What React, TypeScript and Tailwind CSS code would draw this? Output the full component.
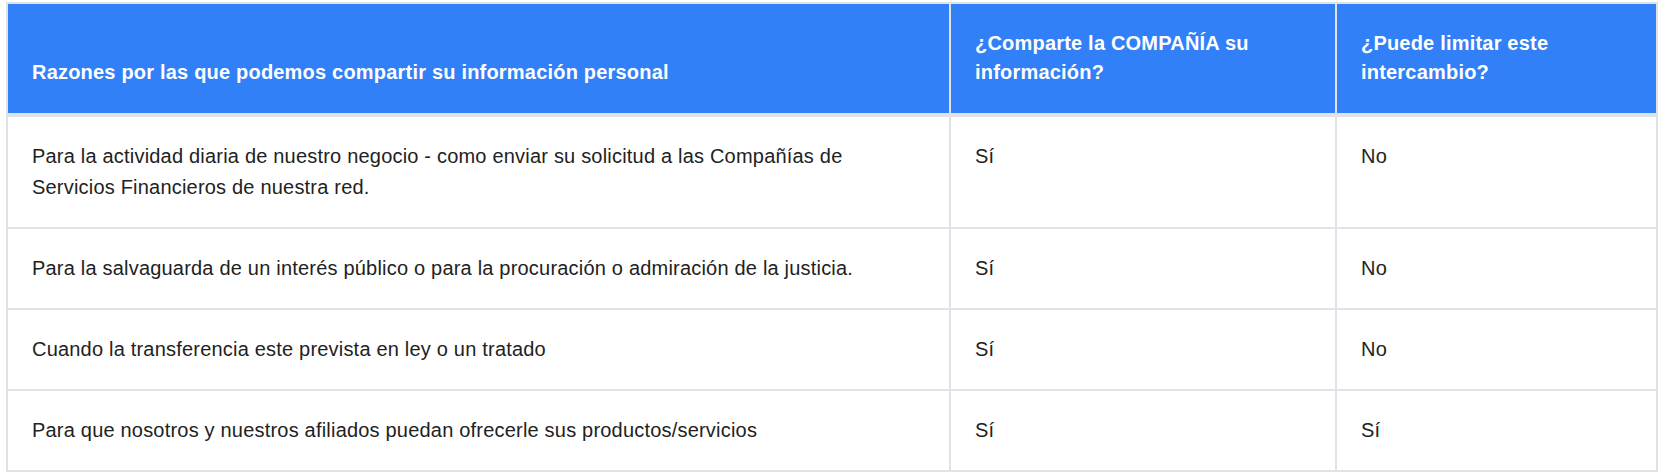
import React from "react";

const rows: [string, string, string][] = [
  [
    "Para la actividad diaria de nuestro negocio - como enviar su solicitud a las Compañías de Servicios Financieros de nuestra red.",
    "Sí",
    "No",
  ],
  [
    "Para la salvaguarda de un interés público o para la procuración o admiración de la justicia.",
    "Sí",
    "No",
  ],
  ["Cuando la transferencia este prevista en ley o un tratado", "Sí", "No"],
  [
    "Para que nosotros y nuestros afiliados puedan ofrecerle sus productos/servicios",
    "Sí",
    "Sí",
  ],
];

export default function App() {
  return (
    <div
      className="w-[1662px] h-[476px] bg-white pt-[2px] pl-[6px]"
      style={{ fontFamily: '"Liberation Sans", Arial, Helvetica, sans-serif' }}
    >
      <table className="table-fixed border-collapse w-[1650px] text-[20px] tracking-[0.2px]">
        <colgroup>
          <col className="w-[943px]" />
          <col className="w-[386px]" />
          <col className="w-[321px]" />
        </colgroup>
        <thead>
          <tr className="bg-[#3180f7] text-white">
            <th className="border-2 border-b-4 border-[#dfe3e8] pt-[25px] pb-[26px] px-6 text-left align-bottom font-bold leading-[29px]">
              Razones por las que podemos compartir su información personal
            </th>
            <th className="border-2 border-b-4 border-[#dfe3e8] pt-[25px] pb-[26px] px-6 text-left align-bottom font-bold leading-[29px]">
              ¿Comparte la COMPAÑÍA su información?
            </th>
            <th className="border-2 border-b-4 border-[#dfe3e8] pt-[25px] pb-[26px] px-6 text-left align-bottom font-bold leading-[29px]">
              ¿Puede limitar este intercambio?
            </th>
          </tr>
        </thead>
        <tbody className="text-[#222222]">
          {rows.map((r, i) => (
            <tr key={i}>
              <td className="border-2 border-[#dfe3e8] py-6 px-6 align-top leading-[31px]">
                {r[0]}
              </td>
              <td className="border-2 border-[#dfe3e8] py-6 px-6 align-top leading-[31px]">
                {r[1]}
              </td>
              <td className="border-2 border-[#dfe3e8] py-6 px-6 align-top leading-[31px]">
                {r[2]}
              </td>
            </tr>
          ))}
        </tbody>
      </table>
    </div>
  );
}
